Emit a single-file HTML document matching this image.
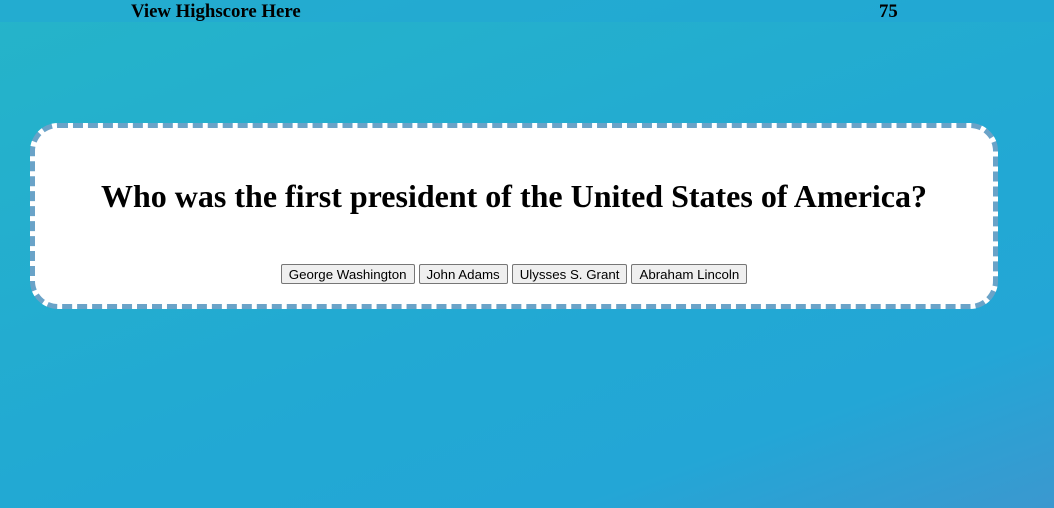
<!DOCTYPE html>
<html><head><style>
html,body{margin:0;height:508px;overflow:hidden}
body{background:linear-gradient(160deg,#25b4c9 0%,#22a9d3 55%,#23a6d6 80%,#3b98cf 100%);font-family:"Liberation Serif",serif;position:relative;width:1054px}
.hdr{position:absolute;left:0;top:0;width:1054px;height:22px;background:rgba(34,166,214,0.55)}
.hs{position:absolute;left:131px;top:1px;font-weight:bold;font-size:18.8px;line-height:22px}
.sc{position:absolute;left:879px;top:1px;font-weight:bold;font-size:18.8px;line-height:22px}
.box{position:absolute;left:30px;top:123px;width:958px;height:176px;background:#fff;border:5px dashed #6aa3c8;border-radius:28px;text-align:center}
h1{margin:0;position:absolute;left:0;right:0;top:48px;font-size:32px;line-height:40px;font-weight:bold}
.btns{position:absolute;left:0;right:0;top:136px;font-size:0}
button{font-family:"Liberation Sans",sans-serif;font-size:13.3px;height:20px;padding:0 7px;margin:0 2px;background:#efefef;border:1px solid #767676;border-radius:2px;color:#000}
</style></head><body>
<div class="hdr"></div>
<div class="hs">View Highscore Here</div>
<div class="sc">75</div>
<div class="box">
<h1>Who was the first president of the United States of America?</h1>
<div class="btns"><button>George Washington</button><button>John Adams</button><button>Ulysses S. Grant</button><button>Abraham Lincoln</button></div>
</div>
</body></html>
